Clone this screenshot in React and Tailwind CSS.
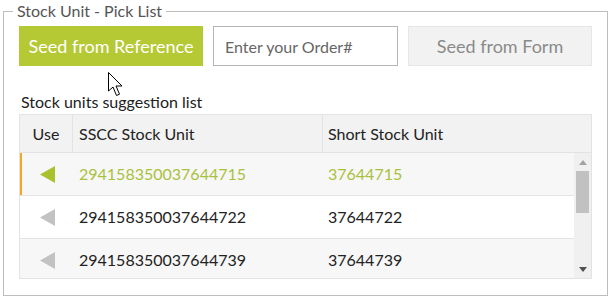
import React from 'react';

const rows = [
  { sscc: '294158350037644715', short: '37644715', active: true },
  { sscc: '294158350037644722', short: '37644722' },
  { sscc: '294158350037644739', short: '37644739' },
];

const Triangle = ({ color }) => (
  <svg width="16" height="17" viewBox="0 0 16 17">
    <polygon points="0,8.5 15,0 15,17" fill={color} />
  </svg>
);

const Cursor = () => (
  <svg
    className="absolute left-[108px] top-[72px]"
    width="18"
    height="26"
    viewBox="0 0 18 26"
  >
    <path
      d="M0.5 0.5 L0.5 19 L5 15 L8.5 23.5 L11.5 22.2 L8 14 L14 14 Z"
      fill="#fff"
      stroke="#000"
      strokeWidth="1"
      strokeLinejoin="miter"
    />
  </svg>
);

export default function App() {
  return (
    <div
      className="relative w-[612px] h-[301px] bg-white"
      style={{ fontFamily: 'Lato, "Open Sans", sans-serif' }}
    >
      <fieldset className="ml-[3px] w-[605px] h-[296px] border border-[#bdbdbd] px-[15px] pt-[4px]">
        <legend className="-ml-[6px] px-[4px] text-[16px] leading-[22px] text-[#555]">
          Stock Unit - Pick List
        </legend>

        {/* actions */}
        <div className="flex gap-[10px]">
          <button className="w-[184px] h-[40px] bg-[#b5c934] text-white text-[18px]">
            Seed from Reference
          </button>
          <input
            placeholder="Enter your Order#"
            className="w-[185px] h-[40px] border border-[#b5b5b5] px-[11px] text-[16px] placeholder:text-[#666] outline-none"
          />
          <button className="w-[184px] h-[40px] bg-[#f2f2f2] border border-[#e6e6e6] text-[#8a8a8a] text-[18px]">
            Seed from Form
          </button>
        </div>

        <div className="mt-[26px] mb-[2px] pl-[2px] text-[16px] leading-[20px] text-[#222]">
          Stock units suggestion list
        </div>

        {/* table */}
        <div className="w-[573px] border border-[#e3e3e3] text-[16px] text-[#222]">
          <div className="flex h-[38px] bg-[#f2f2f2] border-b border-[#e3e3e3] items-center">
            <div className="w-[53px] h-full flex items-center justify-center border-r border-[#e3e3e3]">
              Use
            </div>
            <div className="w-[250px] h-full flex items-center pl-[6px] border-r border-[#e3e3e3]">
              SSCC Stock Unit
            </div>
            <div className="flex-1 pl-[5px]">Short Stock Unit</div>
          </div>

          <div className="flex h-[125px] overflow-hidden">
            <div className="flex-1">
              {rows.map((r, i) => (
                <div
                  key={r.sscc}
                  className={`relative flex h-[43px] shrink-0 items-center border-b border-[#e3e3e3] ${
                    i % 2 === 0 ? 'bg-[#f7f7f7]' : 'bg-white'
                  } ${r.active ? 'text-[#a9c13c]' : ''}`}
                >
                  {r.active && (
                    <div className="absolute left-0 top-0 bottom-0 w-[2px] bg-[#f5a623]" />
                  )}
                  <div className="w-[53px] flex justify-center pl-[2px]">
                    <Triangle color={r.active ? '#a8c12d' : '#c2c2c2'} />
                  </div>
                  <div className="w-[250px] pl-[6px]">{r.sscc}</div>
                  <div className="flex-1 pl-[5px]">{r.short}</div>
                </div>
              ))}
            </div>
            {/* scrollbar */}
            <div className="w-[17px] bg-[#f0f0f0] flex flex-col items-center">
              <div className="h-[18px] flex items-center justify-center">
                <svg width="8" height="5" viewBox="0 0 8 5">
                  <polygon points="4,0 8,5 0,5" fill="#a3a3a3" />
                </svg>
              </div>
              <div className="w-[13px] h-[42px] bg-[#c1c1c1]" />
              <div className="flex-1" />
              <div className="h-[18px] flex items-center justify-center">
                <svg width="8" height="5" viewBox="0 0 8 5">
                  <polygon points="0,0 8,0 4,5" fill="#505050" />
                </svg>
              </div>
            </div>
          </div>
        </div>
      </fieldset>
      <Cursor />
    </div>
  );
}
